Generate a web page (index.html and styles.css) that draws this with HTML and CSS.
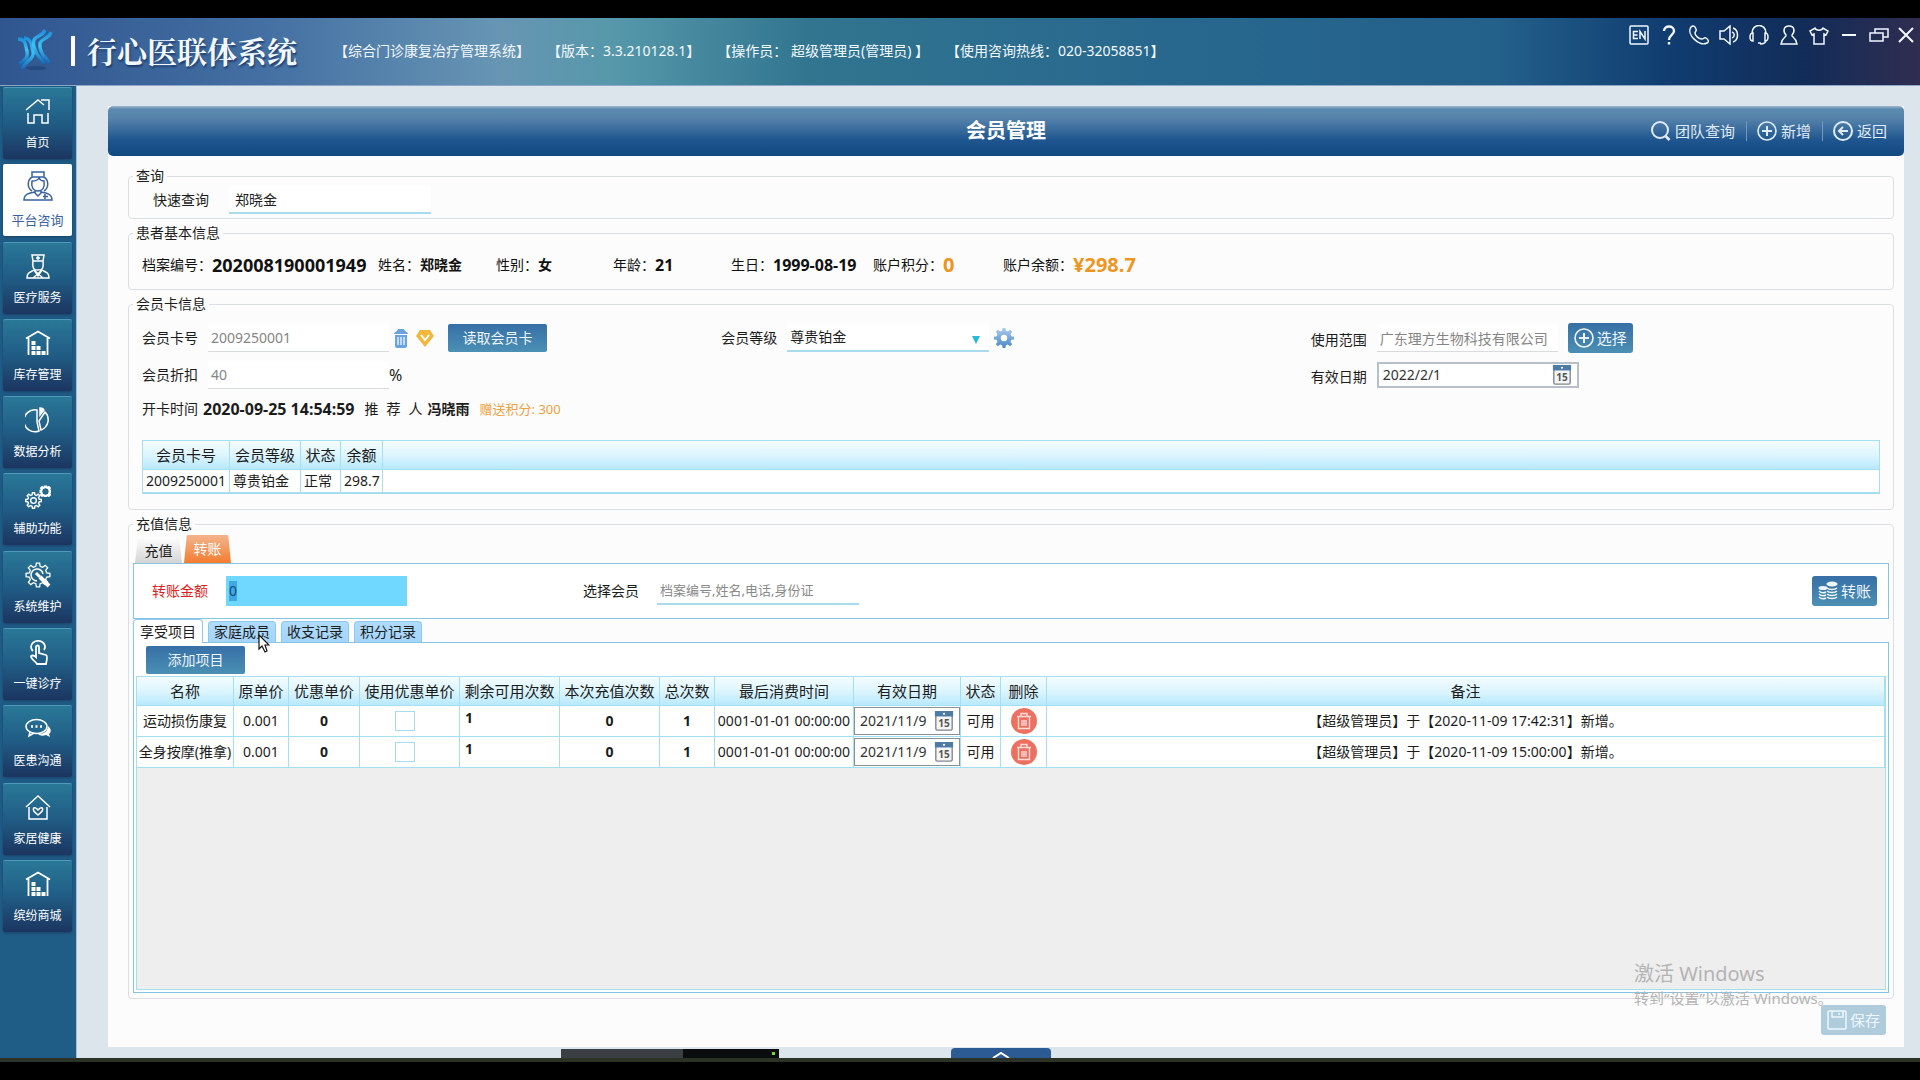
FILE: index.html
```html
<!DOCTYPE html>
<html lang="zh-CN">
<head>
<meta charset="utf-8">
<title>行心医联体系统</title>
<link rel="stylesheet" href="styles.css">
</head>
<body>
<svg class="defs" aria-hidden="true">
  <defs>
    <linearGradient id="logo-blue" x1="0" y1="0" x2="0" y2="1"><stop offset="0" stop-color="#1f8fdc"/><stop offset=".45" stop-color="#3cc4f5"/><stop offset="1" stop-color="#1668b8"/></linearGradient>
    <linearGradient id="gear-blue" x1="0" y1="0" x2="0" y2="1"><stop offset="0" stop-color="#a9cbee"/><stop offset="1" stop-color="#4a86c8"/></linearGradient>
    <symbol id="i-warehouse" viewBox="0 0 26 26"><path d="M1 8.500 13 1.500 25 8.500M3.500 8v17M22.500 8v17" fill="none" stroke="currentColor" stroke-width="1.800"/><path class="solid" d="M6.500 11h4v4h-4zM6.500 16h4v4h-4zM11.500 16h4v4h-4zM6.500 21h4v4h-4zM11.500 21h4v4h-4zM16.500 21h4v4h-4z" fill="currentColor"/></symbol>
    <symbol id="i-gear" viewBox="0 0 24 24"><path d="M10.500 1h3L14 4l2.200.9 2.500-1.800 2.200 2.200-1.800 2.500L20 10l3 .5v3l-3 .5-.9 2.200 1.800 2.500-2.200 2.200-2.500-1.800L14 20l-.5 3h-3L10 20l-2.200-.9-2.500 1.800-2.200-2.200 1.800-2.500L4 14l-3-.5v-3l3-.5.9-2.200-1.800-2.500 2.200-2.200 2.500 1.800L10 4z"/></symbol>
    <symbol id="i-calendar" viewBox="0 0 20 22"><rect x="1" y="1" width="18" height="20" rx="1.500" fill="#f4f4f4" stroke="#7d8790" stroke-width="1.500"/><path d="M0 0h20v6H0z" fill="#4d7ba6"/><circle cx="10" cy="3" r="1.200" fill="#fff"/><text x="10" y="18" text-anchor="middle" class="cal-num">15</text></symbol>
    <symbol id="i-trash" viewBox="0 0 26 26"><circle cx="13" cy="13" r="13" fill="#ec6f60"/><path d="M6 8.500h14M10 8V5.500h6V8M7.500 9v11.500h11V9M11 12v6M13 12v6M15 12v6" fill="none" stroke="#fbdcd7" stroke-width="1.400"/></symbol>
    <symbol id="i-plus" viewBox="0 0 20 20"><circle cx="10" cy="10" r="9" fill="none" stroke="currentColor" stroke-width="1.600"/><path d="M10 5v10M5 10h10" stroke="currentColor" stroke-width="2"/></symbol>
  </defs>
</svg>

<div class="app">
  <header class="top">
    <svg class="logo" viewBox="0 0 36 42"><ellipse cx="19" cy="39" rx="10" ry="2" fill="#1c3f74" opacity=".6"/><g fill="none" stroke="url(#logo-blue)" stroke-width="3.400"><path d="M1 10c9 0 7 7 9 12 1 6-1 9-8 13"/><path d="M7 9c8 1 7 7 9 13 2 8-7 9-11 18"/><path d="M28 1c-3 7-9 5-11 10-2 6 1 9 3 14 2 4 6 5 7 10"/><path d="M34 3c-2 7-9 6-11 11-1 5 1 8 3 12 2 3 5 4 6 8"/></g></svg>
    <span class="brand-bar"></span>
    <h1 class="brand">行心医联体系统</h1>
    <div class="meta"><span>【综合门诊康复治疗管理系统】</span><span>【版本：3.3.210128.1】</span><span>【操作员： 超级管理员(管理员) 】</span><span>【使用咨询热线：020-32058851】</span></div>
    <div class="tools">
      <button aria-label="语言"><svg viewBox="0 0 20 20"><rect x="1" y="1" width="18" height="18" rx="1"/><path d="M9 6.500H4.500v7H9M4.500 10h4M11 14V6.500l5 7.500V6"/></svg></button>
      <button aria-label="帮助"><svg viewBox="0 0 20 20"><path stroke-width="2.400" d="M5 6c0-6 10-6 10 0 0 4-5 4-5 9M10 17v2.500"/></svg></button>
      <button aria-label="电话"><svg viewBox="0 0 20 20"><path d="M2 2c2-2 4-1 5 2 1 2-1 2-1 4 0 3 4 6 7 6 2 0 2-2 4-1 3 2 3 4 1 5C10 22-3 9 2 2z"/></svg></button>
      <button aria-label="声音"><svg viewBox="0 0 20 20"><path d="M1 6h4l6-5v18l-6-5H1zM13 7c3 1 3 5 0 6M14 3c6 2 6 12 0 14M11 7v6"/></svg></button>
      <button aria-label="客服"><svg viewBox="0 0 20 20"><path d="M3 8C3-2 17-2 17 8M4 8v8c-4 0-4-8 0-8zM16 8v8c4 0 4-8 0-8zM17 15c0 3-3 4-6 4M9 18h3"/></svg></button>
      <button aria-label="用户"><svg viewBox="0 0 20 20"><path d="M10 1C4 1 4 7 7 10c1 2-4 2-5 9h16c-1-7-6-7-5-9 3-3 3-9-3-9z"/></svg></button>
      <button aria-label="换肤"><svg viewBox="0 0 20 20"><path d="M6 3c1 3 7 3 8 0l5 3-2 4-2-1v10H5V9l-2 1-2-4z"/></svg></button>
      <button aria-label="最小化"><svg viewBox="0 0 20 20"><path stroke-width="2" d="M3 10h14"/></svg></button>
      <button aria-label="还原"><svg viewBox="0 0 20 20"><path d="M6 8V4h13v8h-5M1 8h13v8H1z"/></svg></button>
      <button aria-label="关闭"><svg viewBox="0 0 20 20"><path stroke-width="2" d="M3 3l14 14M17 3 3 17"/></svg></button>
    </div>
  </header>

  <div class="body">
    <nav class="side">
      <a href="#"><svg viewBox="0 0 26 26"><path d="M1 12 13 2l6 5M16 2h8v10M3 15v10h6v-8h8v8h6V15"/></svg>首页</a>
      <a href="#" class="on"><svg class="big" viewBox="0 0 30 30"><path d="M9 1h12v5H9zM9 6C4 9 4 17 9 20M21 6c5 3 5 11 0 14M9 10c-1 6 1 10 6 10s7-4 6-10c-2 0-4-1-5-3-1 2-4 3-7 3zM12 20v2l3 3 3-3v-2M12 21C6 22 1 23 1 29h28c0-6-5-7-11-8M22 23v5M20 25.500h5"/></svg>平台咨询</a>
      <a href="#"><svg viewBox="0 0 26 26"><path d="M7 2h12l-1 6H8zM8 8c-1 9 2 9 5 9s6 0 5-9M13 3v4M11 5h4M2 25c0-6 4-6 7-8l4 6 4-6c3 2 7 2 7 8zM9 17l9 8M17 17l-9 8"/></svg>医疗服务</a>
      <a href="#"><svg><use href="#i-warehouse"/></svg>库存管理</a>
      <a href="#"><svg viewBox="0 0 26 26"><path d="M12 3a11 11 0 1 0 2 21l-2-9zM20 5a11 11 0 0 1-4 18l-2-9z"/><path d="M15 1c2 0 3 0 4 2l-4 5z" fill="currentColor"/></svg>数据分析</a>
      <a href="#"><svg viewBox="0 0 26 26"><svg class="g1" x="0" y="8" width="17" height="17" viewBox="0 0 24 24"><use href="#i-gear"/><circle cx="12" cy="12" r="4"/></svg><svg class="g2" x="14" y="1" width="12" height="12" viewBox="-1 -1 26 26"><use href="#i-gear"/></svg></svg>辅助功能</a>
      <a href="#"><svg viewBox="0 0 26 26"><svg class="g0" width="26" height="26" viewBox="0 0 24 24"><use href="#i-gear"/></svg><path d="M18 12a6 6 0 1 0-6 7"/><path d="M15 15l9 9" stroke-width="4"/><path d="M11 11l4 4" stroke-width="3"/></svg>系统维护</a>
      <a href="#"><svg viewBox="0 0 26 26"><path d="M8 12a7 6 0 1 1 11-1M11 17V8c0-2 3-2 3 0v6l7 2c2 1 1 5 0 9h-9c-2-3-5-4-6-7 0-2 3-2 5 0z" stroke-width="1.800"/></svg>一键诊疗</a>
      <a href="#"><svg viewBox="0 0 26 26"><path d="M23 10c4 3 3 7 1 8l1 3-4-2c-3 1-6 1-8-1 6 0 10-3 10-8z" fill="currentColor" stroke="none"/><ellipse cx="11.500" cy="10.500" rx="10.500" ry="7"/><path d="M5 16l-1 4 5-3"/><path d="M6 10.500h2M10.500 10.500h2M15 10.500h2" stroke-width="2.400"/></svg>医患沟通</a>
      <a href="#"><svg viewBox="0 0 26 26"><path d="M1 13 13 2l12 11M4 13v12h18V13M13 21c-8-6-4-9-1-6l1 1 1-1c3-3 7 0-1 6z"/></svg>家居健康</a>
      <a href="#"><svg><use href="#i-warehouse"/></svg>缤纷商城</a>
    </nav>

    <main class="panel">
      <div class="title-bar">
        <h2>会员管理</h2>
        <div class="actions">
          <button><svg viewBox="0 0 20 20"><circle cx="9" cy="9" r="8"/><path d="M14.500 15l4 4" stroke-width="2.600"/></svg>团队查询</button>
          <button><svg><use href="#i-plus"/></svg>新增</button>
          <button><svg viewBox="0 0 20 20"><circle cx="10" cy="10" r="9"/><path d="M15 10H6M10 6l-4 4 4 4" stroke-width="2"/></svg>返回</button>
        </div>
      </div>

      <div class="content">
        <fieldset class="group">
          <legend>查询</legend>
          <div class="quick"><label for="quick">快速查询</label><input id="quick" class="line w-search" value="郑晓金"></div>
        </fieldset>

        <fieldset class="group">
          <legend>患者基本信息</legend>
          <dl class="patient">
            <div><dt>档案编号：</dt><dd class="num">202008190001949</dd></div>
            <div><dt>姓名：</dt><dd>郑晓金</dd></div>
            <div><dt>性别：</dt><dd>女</dd></div>
            <div><dt>年龄：</dt><dd class="mid">21</dd></div>
            <div><dt>生日：</dt><dd class="mid">1999-08-19</dd></div>
            <div><dt>账户积分：</dt><dd class="money">0</dd></div>
            <div><dt>账户余额：</dt><dd class="money">¥298.7</dd></div>
          </dl>
        </fieldset>

        <fieldset class="group">
          <legend>会员卡信息</legend>
          <div class="card-grid">
            <div class="col">
              <div class="row">
                <label for="card">会员卡号</label><input id="card" class="line off w-card" value="2009250001" readonly>
                <svg class="bin" viewBox="0 0 14 20"><path d="M0 6c0-2 4-3 4-5h6c0 2 4 3 4 5zM1 7h12v11c0 1-1 2-2 2H3c-1 0-2-1-2-2z" fill="#6ba3e0"/><path d="M4 9v8M7 9v8M10 9v8" stroke="#e8f2fd" stroke-width="1.400"/></svg>
                <svg class="gem" viewBox="0 0 18 18"><path d="M4 1h10l4 6-9 11L0 7z" fill="#f0b93e"/><path d="M5 6l4 5 4-5" fill="none" stroke="#fff" stroke-width="2"/></svg>
                <button class="btn wide">读取会员卡</button>
              </div>
              <div class="row"><label for="off">会员折扣</label><input id="off" class="line off w-card" value="40" readonly><span class="mid">%</span></div>
              <div class="row facts"><span>开卡时间</span><b class="mid">2020-09-25 14:54:59</b><span class="spread"><i>推</i><i>荐</i><i>人</i></span><b>冯晓雨</b><span class="gift">赠送积分: 300</span></div>
            </div>
            <div class="col">
              <div class="row"><label for="level">会员等级</label>
                <span class="select"><select id="level" class="line w-search"><option>尊贵铂金</option></select></span>
                <svg class="cog" viewBox="0 0 24 24"><use href="#i-gear"/><circle cx="12" cy="12" r="3.500" fill="#fff"/></svg>
              </div>
            </div>
            <div class="col right">
              <div class="row"><label for="scope">使用范围</label><input id="scope" class="line off w-card" value="广东理方生物科技有限公司" readonly><button class="btn icon"><svg><use href="#i-plus"/></svg>选择</button></div>
              <div class="row"><label for="until">有效日期</label><span class="date w-search"><input id="until" value="2022/2/1"><svg><use href="#i-calendar"/></svg></span></div>
            </div>
          </div>
          <table class="grid cards">
            <colgroup><col class="c87"><col class="c71"><col class="c40"><col class="c42"><col></colgroup>
            <thead><tr><th>会员卡号</th><th>会员等级</th><th>状态</th><th>余额</th><th></th></tr></thead>
            <tbody><tr><td>2009250001</td><td>尊贵铂金</td><td>正常</td><td>298.7</td><td></td></tr></tbody>
          </table>
        </fieldset>

        <fieldset class="group recharge">
          <legend>充值信息</legend>
          <div class="tabs"><button class="tab">充值</button><button class="tab hot">转账</button></div>
          <div class="transfer">
            <label for="amount" class="red">转账金额</label>
            <div id="amount" class="amount" role="textbox" contenteditable="true"><mark>0</mark></div>
            <label for="member" class="member-label">选择会员</label>
            <input id="member" class="line small w-search" placeholder="档案编号,姓名,电话,身份证">
            <button class="btn icon push"><svg viewBox="0 0 20 20"><g class="solid" fill="currentColor"><ellipse cx="5" cy="7" rx="4.500" ry="2"/><ellipse cx="14" cy="3" rx="5.500" ry="2.500"/></g><path d="M1 10c2 2 5 2 7 1M1 13c2 2 5 2 7 1M1 16c2 2 5 2 7 1M9 7c2 2 8 2 10 0M9 10c2 2 8 2 10 0M9 13c2 2 8 2 10 0M9 16c2 2 8 2 10 0"/></svg>转账</button>
          </div>
          <div class="subtabs">
            <button class="sub on">享受项目</button>
            <button class="sub">家庭成员<svg class="cursor" viewBox="0 0 12 19"><path d="M1 1v14l3-3 3 6 2-1-2-6h4z" fill="#fff" stroke="#111" stroke-width="1.200"/></svg></button>
            <button class="sub">收支记录</button>
            <button class="sub">积分记录</button>
          </div>
          <div class="items">
            <button class="btn wide add">添加项目</button>
            <div class="sheet">
              <table class="grid list">
                <colgroup><col class="c97"><col class="c55"><col class="c71"><col class="c101"><col class="c101"><col class="c101"><col class="c55"><col class="c138"><col class="c107"><col class="c40"><col class="c45"><col></colgroup>
                <thead><tr><th>名称</th><th>原单价</th><th>优惠单价</th><th>使用优惠单价</th><th>剩余可用次数</th><th>本次充值次数</th><th>总次数</th><th>最后消费时间</th><th>有效日期</th><th>状态</th><th>删除</th><th>备注</th></tr></thead>
                <tbody>
                  <tr><td>运动损伤康复</td><td>0.001</td><td><b>0</b></td><td class="tick"><input type="checkbox" aria-label="使用优惠单价"></td><td class="top-left"><b>1</b></td><td><b>0</b></td><td><b>1</b></td><td>0001-01-01 00:00:00</td><td><span class="date cell"><input value="2021/11/9" aria-label="有效日期"><svg><use href="#i-calendar"/></svg></span></td><td>可用</td><td><button class="del" aria-label="删除"><svg><use href="#i-trash"/></svg></button></td><td>【超级管理员】于【2020-11-09 17:42:31】新增。</td></tr>
                  <tr><td>全身按摩(推拿)</td><td>0.001</td><td><b>0</b></td><td class="tick"><input type="checkbox" aria-label="使用优惠单价"></td><td class="top-left"><b>1</b></td><td><b>0</b></td><td><b>1</b></td><td>0001-01-01 00:00:00</td><td><span class="date cell"><input value="2021/11/9" aria-label="有效日期"><svg><use href="#i-calendar"/></svg></span></td><td>可用</td><td><button class="del" aria-label="删除"><svg><use href="#i-trash"/></svg></button></td><td>【超级管理员】于【2020-11-09 15:00:00】新增。</td></tr>
                </tbody>
              </table>
            </div>
          </div>
        </fieldset>

        <div class="foot"><button class="btn icon save" disabled><svg viewBox="0 0 20 20"><rect x="1" y="1" width="18" height="18" rx="1"/><path d="M5 1v6h11V1M12 3v2"/></svg>保存</button></div>
      </div>
    </main>
    <div class="watermark"><p>激活 Windows</p><p class="sm">转到“设置”以激活 Windows。</p></div>
    <div class="dock"><span class="dot"></span></div>
    <button class="pull" aria-label="展开"><svg viewBox="0 0 20 8"><path d="M2 8l8-5 8 5"/></svg></button>
  </div>
</div>
</body>
</html>
```
FILE: styles.css
```css
* { box-sizing: border-box; }
body { margin: 0; background: #000; color: #1c1c1c; font: 14px/20px "Noto Sans", "Noto Sans CJK SC", sans-serif; }
h1, h2, p, dl, dd { margin: 0; }
button, input, select { font: inherit; color: inherit; }
button { border: 0; padding: 0; background: none; white-space: nowrap; }
svg { display: block; flex: none; fill: none; stroke: currentColor; stroke-width: 1.5; }
.solid { stroke: none; }
.defs { position: absolute; width: 0; height: 0; }
.app { min-height: 100vh; padding: 18px 0; display: flex; flex-direction: column; }

/* header */
.top { height: 68px; display: flex; align-items: center; padding: 0 4px 0 17px; color: #f2f8ff; border-bottom: 1px solid #90a8c8; background: linear-gradient(90deg, #30568f 0, #4470a3 14%, #6795b3 26%, #5698aa 32%, #31758f 42%, #28688e 60%, #23608a 78%, #103c70 87%, #122c58 94%, #302d50 100%); }
.logo { width: 36px; height: 42px; stroke: none; margin-bottom: 4px; }
.brand-bar { width: 4px; height: 30px; background: #fff; margin: 0 12px 2px 18px; }
.brand { font: bold 30px/40px "Noto Serif CJK SC", "Noto Sans CJK SC", serif; text-shadow: 1px 2px 2px #1c3c6c; white-space: nowrap; padding-bottom: 4px; }
.meta { display: flex; gap: 17px; margin-left: 37px; padding-bottom: 2px; white-space: nowrap; }
.tools { margin-left: auto; align-self: flex-start; display: flex; gap: 10px; padding-top: 7px; }
.tools svg { width: 20px; height: 20px; }
.tools button:last-child { margin-left: -3px; }

/* sidebar */
.body { flex: 1; display: flex; position: relative; background: #dce4ec; border-bottom: 4px solid #2c3326; }
.side { width: 77px; flex: none; padding: 1px 4px 126px 3px; display: flex; flex-direction: column; justify-content: space-between; background: #1f5d87; border-right: 1px solid #a8bcd4; }
.side a { height: 72px; padding-top: 10px; display: flex; flex-direction: column; align-items: center; justify-content: space-between; color: #fff; text-decoration: none; font-size: 12px; line-height: 18px; padding-bottom: 7px; border-top: 1px solid #4f9ab8; border-radius: 2px; background: linear-gradient(#2a7898, #205c84 50%, #1b3560); box-shadow: 0 1px 3px #1a4068; white-space: nowrap; }
.side svg { width: 26px; height: 26px; }
.side .big { width: 30px; height: 30px; }
.side .g0 { stroke-width: 1.2; }
.side .g1 { width: 17px; height: 17px; stroke-width: 2; }
.side .g2 { width: 12px; height: 12px; stroke-width: 4; }
.side .on { background: #fff; color: #3a62a0; border-color: #fff; font-size: 13px; padding-top: 6px; }

/* main panel */
.panel { flex: 1; min-width: 0; margin: 20px 16px 11px 31px; display: flex; flex-direction: column; background: #fcfcfc; }
.title-bar { height: 50px; display: grid; grid-template-columns: 1fr auto 1fr; align-items: center; padding: 0 17px; color: #fff; border-radius: 5px; background: linear-gradient(#a0b8d0 0, #5c8bb0 6%, #5482aa 25%, #1f5690 68%, #124880); }
.title-bar h2 { grid-column: 2; font-size: 20px; line-height: 28px; }
.actions { display: flex; justify-content: flex-end; }
.actions button { display: flex; align-items: center; gap: 4px; font-size: 15px; color: #e0ebf5; padding: 0 11px 0 10px; border-right: 1px solid #7796b8; }
.actions button:last-child { border: 0; padding-right: 0; }
.actions svg { width: 20px; height: 20px; stroke-width: 2; }
.content { flex: 1; padding: 10px 10px 12px 20px; display: flex; flex-direction: column; gap: 4px; }

.group { margin: 0; min-width: 0; border: 1px solid #dcdfe2; border-radius: 4px; padding: 0; }
.group legend { margin-left: 4px; padding: 0 3px; height: 20px; line-height: 20px; }
.line { height: 28px; border: 0; border-bottom: 2px solid #a8dcec; border-radius: 0; background: #fff; padding: 0 6px; outline: 0; }
.line.off { color: #858585; border-bottom: 1px solid #d8dcde; padding: 0 3px; }
.line.small { font-size: 13px; padding: 0 3px; }
.line::placeholder { color: #8a8a8a; }
.w-search { width: 202px; flex: none; }
.w-card { width: 181px; flex: none; }
.quick { display: flex; align-items: center; gap: 20px; padding: 0 0 4px 24px; }

.patient { display: grid; grid-template-columns: 236px 118px 117px 118px 142px 130px 1fr; height: 46px; padding: 0 13px 3px; align-items: center; color: #111; }
.patient div { display: flex; align-items: center; white-space: nowrap; }
.patient dd { font-weight: bold; }
.mid, .patient .mid { font-size: 16px; }
.patient .num { font-size: 18px; }
.patient .money { font-size: 20px; color: #ee9420; }

.card-grid { display: grid; grid-template-columns: repeat(3, 1fr); padding: 9px 13px 19px; }
.col { display: flex; flex-direction: column; gap: 7px; }
.col.right { padding-left: 10px; }
.row { display: flex; align-items: center; height: 30px; white-space: nowrap; }
.row label { margin-right: 10px; }
.right label { padding-top: 4px; }
.bin { width: 14px; height: 20px; margin: 0 8px 0 5px; stroke: none; }
.gem { width: 18px; height: 18px; margin-right: 14px; stroke: none; }
.cog { width: 22px; height: 22px; margin-left: 4px; stroke: none; fill: url(#gear-blue); }
.facts { height: 24px; gap: 5px; }
.spread { display: flex; gap: 8px; margin-left: 5px; }
.spread i { font-style: normal; }
.gift { color: #f0a040; font-size: 13px; margin-left: 5px; }
.select { position: relative; }
.select::after { content: ""; position: absolute; right: 9px; top: 12px; border: 4px solid transparent; border-top: 8px solid #28b8dc; border-bottom: 0; }
.select select { appearance: none; padding: 0 3px; }

.btn { color: #eef6fc; border-radius: 2px; background: linear-gradient(#376fa6, #4b90b4); }
.btn.wide { width: 99px; height: 28px; }
.btn.icon { width: 65px; height: 30px; display: flex; align-items: center; justify-content: center; gap: 3px; font-size: 15px; border-radius: 3px; }
.btn svg { width: 20px; height: 20px; }
.right .btn { margin-left: 10px; }
.date { display: flex; align-items: center; height: 26px; padding: 0 5px 0 4px; border: 2px solid #b8bfc8; background: #fff; }
.date input { flex: 1; min-width: 0; width: 0; border: 0; padding: 0; background: none; outline: 0; color: #333; }
.date svg { width: 20px; height: 20px; stroke: none; }
.cal-num { font: bold 11px "Noto Sans", sans-serif; fill: #555; stroke: none; }
.date.cell { height: 28px; border: 1px solid #8a9299; padding: 0 5px; }

/* tables */
.grid { table-layout: fixed; border-collapse: separate; border-spacing: 0; width: 100%; background: #fff; white-space: nowrap; }
.grid th { height: 30px; padding: 0; font-weight: normal; font-size: 15px; background: linear-gradient(#f4fcff, #ddf5ff 50%, #b8e9fc); border: solid #a4e0f2; border-width: 1px 1px 1px 0; }
.grid td { padding: 0; text-align: center; border: solid #a4e0f2; border-width: 0 1px 1px 0; }
.grid.cards { margin: 0 13px 15px; width: calc(100% - 26px); border-left: 1px solid #a4e0f2; border-bottom: 1px solid #a4dcea; }
.cards td { height: 23px; text-align: left; padding-left: 3px; }
.list td { height: 31px; }
.list .top-left { text-align: left; vertical-align: top; padding-left: 5px; line-height: 24px; }
.list .tick { padding-right: 10px; }
.c40 { width: 40px; } .c42 { width: 42px; } .c45 { width: 46px; } .c55 { width: 55px; } .c71 { width: 71px; }
.c87 { width: 87px; } .c97 { width: 97px; } .c101 { width: 100px; } .c107 { width: 107px; } .c138 { width: 139px; }
.list input[type="checkbox"] { appearance: none; display: block; margin: 0 auto; width: 20px; height: 20px; border: 1px solid #a8dcec; background: #fff; }
.del { display: block; margin: 0 auto; }
.del svg { width: 26px; height: 26px; stroke: none; }

/* recharge area */
.recharge { flex: 1; padding: 0 4px 5px; display: flex; flex-direction: column; }
.group.recharge legend { margin-left: 0; }
.tabs { display: flex; align-items: flex-end; height: 29px; padding-left: 2px; gap: 2px; }
.tab { width: 47px; height: 24px; background: linear-gradient(#fafafa, #d4d4d4); clip-path: polygon(6% 0, 94% 0, 100% 100%, 0 100%); }
.tab.hot { height: 28px; color: #fff; background: linear-gradient(#f4b48c, #f47c30); border-radius: 5px 5px 0 0; }
.transfer { display: flex; align-items: center; height: 56px; padding: 0 11px 0 18px; border: 1px solid #86c4e4; background: #fff; }
.red { color: #e02020; }
.amount { width: 181px; height: 30px; margin-left: 18px; padding: 5px 3px; background: #70d8ff; outline: 0; }
.amount mark { background: #40a8e8; color: #1c4c70; display: inline-block; }
.member-label { margin: 0 18px 0 176px; }
.push { margin-left: auto; }
.subtabs { display: flex; align-items: flex-end; height: 23px; gap: 5px; }
.sub { position: relative; width: 68px; height: 21px; border: 1px solid #8cc8f0; border-bottom: 0; border-radius: 4px 4px 0 0; background: linear-gradient(#b0dcfa, #a4d4fa); }
.sub.on { width: 70px; height: 24px; margin-bottom: -1px; background: #fff; z-index: 1; }
.cursor { position: absolute; left: 49px; top: 12px; width: 12px; height: 19px; z-index: 2; }
.items { flex: 1; display: flex; flex-direction: column; padding: 3px 2px 2px; border: 1px solid #86c4e4; background: #fff; }
.add { margin: 0 0 2px 10px; }
.sheet { flex: 1; background: #eee; border: solid #a4e0f2; border-width: 0 1px 1px; }
.foot { display: flex; justify-content: flex-end; padding: 2px 8px 0 0; }
.save { background: #afccdd; }

/* overlays */
.watermark { position: absolute; right: 90px; bottom: 49px; width: 196px; color: #b4b4b4; font-size: 20px; line-height: 26px; white-space: nowrap; pointer-events: none; }
.watermark .sm { font-size: 15px; line-height: 22px; }
.dock { position: absolute; left: 561px; bottom: 0; width: 218px; height: 9px; background: linear-gradient(90deg, #3a3f44 56%, #0a0c0e 56%); }
.dot { position: absolute; right: 4px; top: 3px; width: 3px; height: 3px; background: #6ce030; }
.pull { position: absolute; left: 951px; bottom: 0; width: 100px; height: 10px; border-radius: 4px 4px 0 0; background: #2c5a92; color: #fff; }
.pull svg { width: 20px; height: 8px; margin: 1px auto 0; stroke-width: 2; }
```
